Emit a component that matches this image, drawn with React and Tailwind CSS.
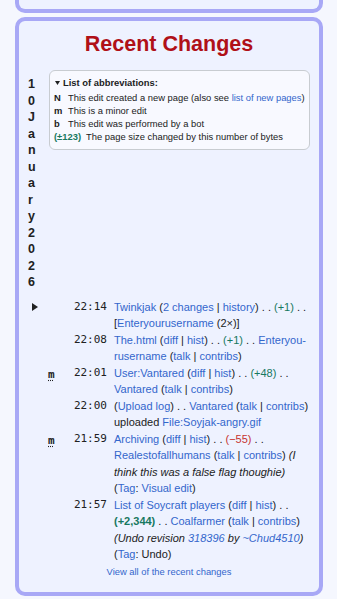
import React from "react";

const A = ({ children }) => <span className="text-[#3366cc]">{children}</span>;
const G = ({ children, bold }) => (
  <span className={bold ? "text-[#177860] font-bold" : "text-[#177860]"}>{children}</span>
);
const R = ({ children }) => <span className="text-[#c7322f]">{children}</span>;

function Row({ arrow, minor, time, children }) {
  return (
    <div className="flex items-start">
      <div className="w-[18px] shrink-0 h-[16.5px] flex items-center">
        {arrow && (
          <svg width="6" height="8" viewBox="0 0 6 8" className="ml-[4px]">
            <path d="M0 0 L6 4 L0 8 Z" fill="#202122" />
          </svg>
        )}
      </div>
      <div className="w-[22px] shrink-0 leading-[16.5px]">
        {minor && (
          <abbr
            title="This is a minor edit"
            className="ml-[2px] font-['DejaVu_Sans_Mono',monospace] font-bold text-[11px] underline decoration-dotted underline-offset-2"
          >
            m
          </abbr>
        )}
      </div>
      <div className="w-[46px] shrink-0 text-right pr-[7px] font-['DejaVu_Sans_Mono',monospace] text-[11px] leading-[16.5px]">
        {time}
      </div>
      <div className="flex-1 min-w-0 text-[11px] leading-[16.5px]">{children}</div>
    </div>
  );
}

export default function App() {
  return (
    <div className="min-h-screen bg-[#f5f7fe] pl-[15px] pr-[14px] pb-[3px] font-['Liberation_Sans',Arial,sans-serif] text-[#202122]">
      <div className="h-[13px] border-4 border-t-0 border-[#a8a8f6] rounded-b-[10px] bg-[#eef2ff]" />
      <div className="mt-[4px] border-4 border-[#a8a8f6] rounded-[10px] bg-[#eef2ff] pt-[10px] pb-[14px]">
        <h2 className="text-center text-[21.5px] leading-[27px] font-bold text-[#b01018]">
          Recent Changes
        </h2>
        <div className="mt-[12px] flex items-start pl-[9px] pr-[9px]">
          <div className="w-[8px] shrink-0 mt-[6px] break-all text-[12.5px] leading-[16.5px] font-bold">
            10January2026
          </div>
          <div className="ml-[13px] flex-1 border border-[#c8ccd1] rounded-[6px] bg-[#f8f9ff] pl-[4px] pr-[4px] pt-[5px] pb-[6px] text-[9.4px] leading-[13px]">
            <div className="flex items-center font-bold mb-[1.5px]">
              <svg width="5" height="4" viewBox="0 0 5 4" className="ml-[1px] mr-[3px]">
                <path d="M0 0 L5 0 L2.5 4 Z" fill="#202122" />
              </svg>
              List of abbreviations:
            </div>
            <div className="flex">
              <span className="font-bold min-w-[9px] mr-[5px]">N</span>
              <span>
                This edit created a new page (also see <A>list of new pages</A>)
              </span>
            </div>
            <div className="flex">
              <span className="font-bold min-w-[9px] mr-[5px]">m</span>
              <span>This is a minor edit</span>
            </div>
            <div className="flex">
              <span className="font-bold min-w-[9px] mr-[5px]">b</span>
              <span>This edit was performed by a bot</span>
            </div>
            <div className="flex">
              <span className="font-bold min-w-[9px] mr-[5px] text-[#177860]">(±123)</span>
              <span>The page size changed by this number of bytes</span>
            </div>
          </div>
        </div>
        <div className="mt-[8px] pl-[9px] pr-[8px]">
          <Row arrow time="22:14">
            <A>Twinkjak</A> (<A>2 changes</A> | <A>history</A>) . . <G>(+1)</G> . . [
            <A>Enteryourusername</A> (2×)]
          </Row>
          <Row time="22:08">
            <A>The.html</A> (<A>diff</A> | <A>hist</A>) . . <G>(+1)</G> . .{" "}
            <A>{"Enteryou\u00ADrusername"}</A> (<A>talk</A> | <A>contribs</A>)
          </Row>
          <Row minor time="22:01">
            <A>User:Vantared</A> (<A>diff</A> | <A>hist</A>) . . <G>(+48)</G> . .{" "}
            <A>Vantared</A> (<A>talk</A> | <A>contribs</A>)
          </Row>
          <Row time="22:00">
            (<A>Upload log</A>) . . <A>Vantared</A> (<A>talk</A> | <A>contribs</A>) uploaded{" "}
            <A>File:Soyjak-angry.gif</A>
          </Row>
          <Row minor time="21:59">
            <A>Archiving</A> (<A>diff</A> | <A>hist</A>) . . <R>(−55)</R> . .{" "}
            <A>Realestofallhumans</A> (<A>talk</A> | <A>contribs</A>){" "}
            <i>(I think this was a false flag thoughie)</i> (<A>Tag</A>: <A>Visual edit</A>)
          </Row>
          <Row time="21:57">
            <A>List of Soycraft players</A> (<A>diff</A> | <A>hist</A>) . .{" "}
            <G bold>(+2,344)</G> . . <A>Coalfarmer</A> (<A>talk</A> | <A>contribs</A>){" "}
            <i>
              (Undo revision <A>318396</A> by <A>~Chud4510</A>)
            </i>{" "}
            (<A>Tag</A>: Undo)
          </Row>
        </div>
        <div className="mt-[3px] text-center text-[9.4px] leading-[12px]">
          <A>View all of the recent changes</A>
        </div>
      </div>
    </div>
  );
}
